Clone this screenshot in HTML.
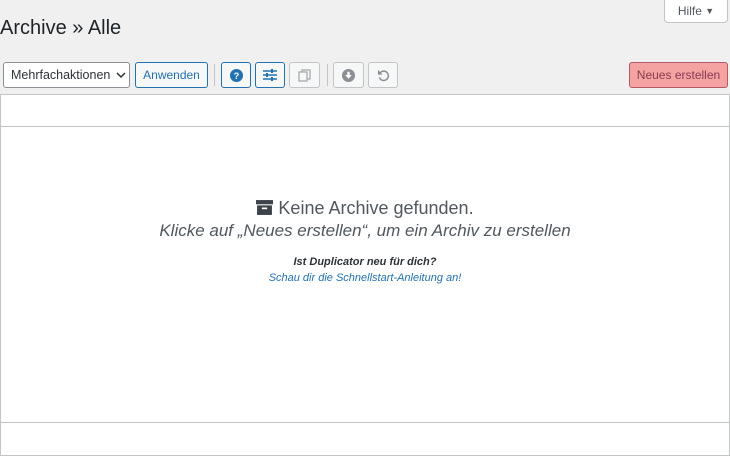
<!DOCTYPE html>
<html><head><meta charset="utf-8"><style>
*{box-sizing:border-box;margin:0;padding:0}
body{width:730px;height:455px;background:#f0f0f1;font-family:"Liberation Sans",sans-serif;position:relative;overflow:hidden;color:#1d2327}
.a{position:absolute}
.btn{position:absolute;top:62px;height:26px;border:1px solid #2271b1;border-radius:3px;background:#f6f7f7;color:#2271b1;font-size:12px;display:flex;align-items:center;justify-content:center}
.dis{border-color:#c3c4c7;color:#a7aaad}
.sep{position:absolute;top:64px;width:1px;height:22px;background:#c3c4c7}
</style></head><body>
<div class="a" style="left:664px;top:-1px;width:64px;height:24px;background:#fff;border:1px solid #c3c4c7;border-radius:0 0 4px 4px;font-size:12px;color:#50575e;display:flex;align-items:center;justify-content:center">Hilfe&nbsp;<span style="font-size:9px">▼</span></div>
<div class="a" style="left:0;top:17px;font-size:20px;color:#1d2327">Archive » Alle</div>
<div class="btn" style="left:3px;width:127px;border-color:#8c8f94;background:#fff;color:#2c3338;font-size:12.5px;justify-content:flex-start;padding-left:7px">Mehrfachaktionen <svg style="margin-left:6px" width="10" height="7" viewBox="0 0 10 7"><path d="M1 1l4 4 4-4" stroke="#2c3338" stroke-width="1.5" fill="none"/></svg></div>
<div class="btn" style="left:135px;width:73px">Anwenden</div>
<div class="sep" style="left:214px"></div>
<div class="btn" style="left:221px;width:30px"><svg width="13" height="13" viewBox="0 0 14 14"><circle cx="7" cy="7" r="7" fill="#2271b1"/><text x="7" y="11" font-size="10" font-weight="bold" fill="#fff" text-anchor="middle" font-family="Liberation Sans">?</text></svg></div>
<div class="btn" style="left:255px;width:30px"><svg width="14" height="12" viewBox="0 0 14 12"><path d="M0 2h14M0 6h14M0 10h14" stroke="#2271b1" stroke-width="1.4"/><rect x="8" y="0" width="2" height="4" fill="#2271b1"/><rect x="3" y="4" width="2" height="4" fill="#2271b1"/><rect x="8" y="8" width="2" height="4" fill="#2271b1"/></svg></div>
<div class="btn dis" style="left:289px;width:31px"><svg width="13" height="13" viewBox="0 0 13 13"><rect x="1" y="3" width="8" height="9" fill="none" stroke="#a7aaad" stroke-width="1.3"/><path d="M4 3V1h8v9h-3" fill="none" stroke="#a7aaad" stroke-width="1.3"/></svg></div>
<div class="sep" style="left:327px"></div>
<div class="btn dis" style="left:333px;width:31px"><svg width="13" height="13" viewBox="0 0 14 14"><circle cx="7" cy="7" r="7" fill="#8c8f94"/><path d="M3.5 6.5h7L7 10.5z" fill="#fff"/><rect x="5.8" y="3" width="2.4" height="4" fill="#fff"/></svg></div>
<div class="btn dis" style="left:368px;width:30px"><svg width="13" height="13" viewBox="0 0 14 14"><path d="M3.5 4A5 5 0 1 1 2.5 9" fill="none" stroke="#8c8f94" stroke-width="1.6"/><path d="M1 1v5h5z" fill="#8c8f94"/></svg></div>
<div class="btn" style="left:629px;width:99px;background:#f4a2a2;border-color:#b35a66;color:#8a3a50;font-size:12px">Neues erstellen</div>
<div class="a" style="left:0;top:94px;width:730px;height:362px;background:#fff;border:1px solid #c3c4c7"></div>
<div class="a" style="left:0;top:126px;width:730px;height:1px;background:#c3c4c7"></div>
<div class="a" style="left:0;top:422px;width:730px;height:1px;background:#c3c4c7"></div>
<div class="a" style="left:0;top:198px;width:730px;text-align:center;color:#50575e;font-size:18px"><svg width="17" height="15" viewBox="0 0 16 14" style="vertical-align:-1px"><rect x="0" y="0" width="16" height="4" fill="#3c434a"/><rect x="1" y="5" width="14" height="9" fill="#3c434a"/><rect x="5.5" y="7" width="5" height="1.6" fill="#fff"/></svg> Keine Archive gefunden.</div>
<div class="a" style="left:0;top:221px;width:730px;text-align:center;color:#50575e;font-size:17px;font-style:italic">Klicke auf „Neues erstellen“, um ein Archiv zu erstellen</div>
<div class="a" style="left:0;top:256px;width:730px;text-align:center;font-size:11px;font-style:italic;font-weight:bold;color:#2c3338">Ist Duplicator neu für dich?</div>
<div class="a" style="left:0;top:272px;width:730px;text-align:center;font-size:11px;font-style:italic;color:#2271b1">Schau dir die Schnellstart-Anleitung an!</div>
</body></html>
